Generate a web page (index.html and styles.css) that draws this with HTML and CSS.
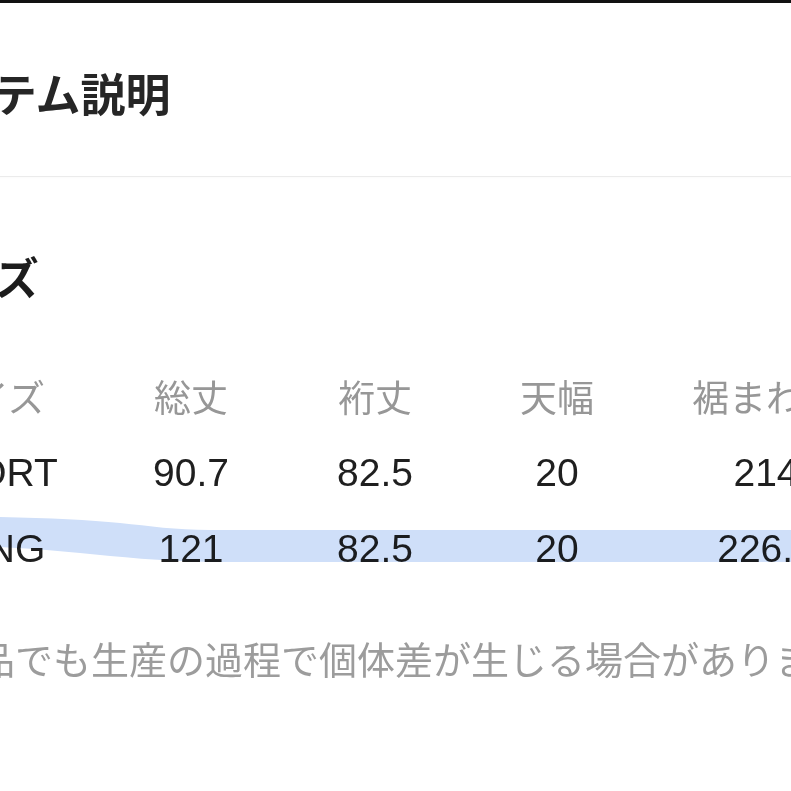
FILE: index.html
```html
<!DOCTYPE html>
<html lang="ja">
<head>
<meta charset="utf-8">
<title>アイテム説明</title>
<link rel="stylesheet" href="styles.css">
</head>
<body>
<div class="topbar"></div>
<main class="page">
  <h1 class="title">アイテム説明</h1>
  <hr class="divider">
  <h2 class="heading">サイズ</h2>
  <div class="size-table">
    <div class="cell head">サイズ</div>
    <div class="cell head">総丈</div>
    <div class="cell head">裄丈</div>
    <div class="cell head">天幅</div>
    <div class="cell head">裾まわり</div>

    <div class="cell">SHORT</div>
    <div class="cell">90.7</div>
    <div class="cell">82.5</div>
    <div class="cell">20</div>
    <div class="cell">214</div>

    <div class="cell">LONG</div>
    <div class="cell">121</div>
    <div class="cell">82.5</div>
    <div class="cell">20</div>
    <div class="cell">226.5</div>
  </div>
  <p class="note">商品でも生産の過程で個体差が生じる場合があります。</p>
</main>
<svg class="marker" viewBox="0 0 791 60" width="791" height="60" aria-hidden="true">
  <path d="M0 7 C 50 8, 90 10, 120 13 C 150 16, 175 20, 210 20 L 791 20 L 791 52 L 210 52 C 160 51, 120 47, 80 43 C 50 40, 20 38, 0 37 Z"/>
</svg>
</body>
</html>
```
FILE: styles.css
```css
html, body {
  margin: 0;
  padding: 0;
  background: #ffffff;
  overflow: hidden;
}

body {
  width: 791px;
  height: 791px;
  position: relative;
  font-family: "Liberation Sans", "Noto Sans CJK JP", sans-serif;
  color: #1f1f1f;
}

.topbar {
  height: 3px;
  background: #111111;
}

.page {
  margin-left: -97px;
  width: 1100px;
}

.title {
  margin: 67px 0 0 0;
  padding-left: 2px;
  font-family: "Noto Sans CJK JP", sans-serif;
  font-size: 45px;
  line-height: 45px;
  font-weight: 700;
  color: #262626;
}

.divider {
  margin: 61px 0 0 0;
  border: 0;
  height: 1px;
  background: #ebebeb;
  box-shadow: 0 1px 2px rgba(0, 0, 0, 0.03);
}

.heading {
  margin: 77px 0 0 0;
  padding-left: 5px;
  font-family: "Noto Sans CJK JP", sans-serif;
  font-size: 44px;
  line-height: 44px;
  font-weight: 700;
  color: #1c1c1c;
}

.size-table {
  margin-top: 79px;
  display: grid;
  grid-template-columns: 174px 228px 140px 224px 194px;
  grid-auto-rows: 39px;
  row-gap: 37px;
}

.cell {
  text-align: center;
  font-size: 39px;
  line-height: 39px;
  white-space: nowrap;
  color: #1f1f1f;
}

.cell.head {
  font-family: "Noto Sans CJK JP", sans-serif;
  font-size: 37px;
  color: #979797;
}

.note {
  margin: 71px 0 0 0;
  padding-left: 36px;
  font-family: "Noto Sans CJK JP", sans-serif;
  font-size: 38px;
  line-height: 38px;
  white-space: nowrap;
  color: #9c9c9c;
}

.marker {
  position: absolute;
  left: 0;
  top: 510px;
  mix-blend-mode: multiply;
}

.marker path {
  fill: #cfdff9;
}
```
